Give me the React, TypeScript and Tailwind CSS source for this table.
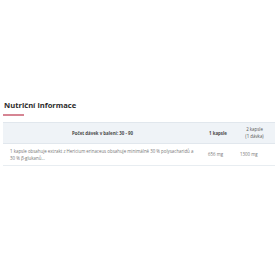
export default function App() {
  return (
    <div className="w-[278px] h-[270px] bg-white font-['Open_Sans',sans-serif]">
      <div className="pt-[99px] px-[3px]">
        <h2 className="text-[7.6px] leading-[12px] font-bold text-[#2b2b2b] pl-[1px]">Nutriční informace</h2>
        <div className="mt-[3px] w-[21px] h-[2px] bg-[#d68593]" />

        <table className="mt-[6px] w-[272px] border-collapse table-fixed text-[#777]">
          <colgroup>
            <col className="w-[199px]" />
            <col className="w-[32px]" />
            <col className="w-[41px]" />
          </colgroup>
          <thead>
            <tr className="bg-[#eff3f7] border-t border-b border-[#e1e7ed] h-[21px]">
              <th className="text-[4.4px] leading-[7px] font-bold text-center text-[#4a4a4a]">
                Počet dávek v balení: 30 - 90
              </th>
              <th className="text-[4.4px] leading-[7px] font-bold text-center text-[#4a4a4a]">1 kapsle</th>
              <th className="text-[4.4px] leading-[7px] font-normal text-center text-[#555] px-[2px]">
                2 kapsle
                <br />
                (1 dávka)
              </th>
            </tr>
          </thead>
          <tbody>
            <tr className="border-b border-[#e8edf1] h-[22px]">
              <td className="text-[4.4px] leading-[7px] pl-[7px] pr-[4px] align-middle">
                1 kapsle obsahuje extrakt z Hericium erinaceus obsahuje minimálně 30 % polysacharidů a 30 % β-glukanů...
              </td>
              <td className="text-[4.4px] leading-[7px] pl-[6px] align-middle">656 mg</td>
              <td className="text-[4.4px] leading-[7px] pl-[6px] align-middle">1300 mg</td>
            </tr>
          </tbody>
        </table>
      </div>
    </div>
  );
}
